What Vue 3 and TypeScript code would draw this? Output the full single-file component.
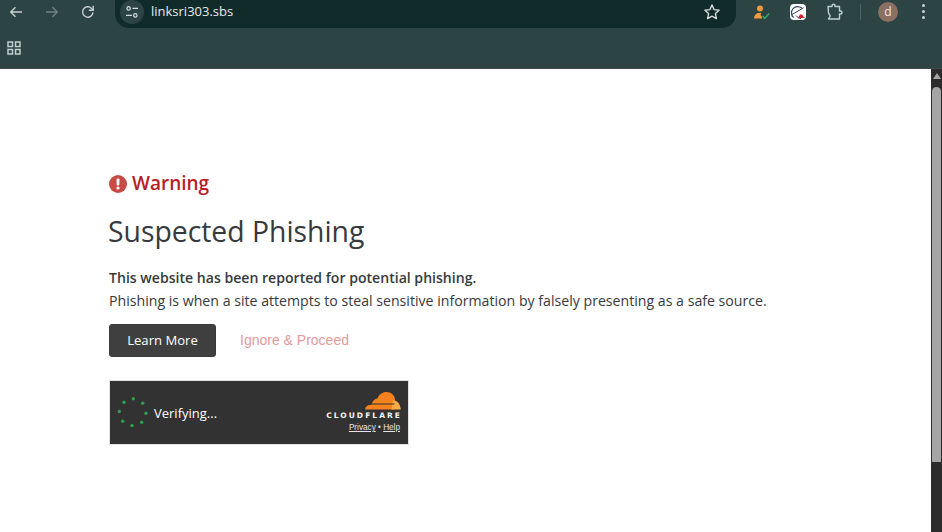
<script setup lang="ts">
const dots: [number, number][] = [
  [14, 7.2], [23.3, 3.8], [32.7, 8.2], [36, 18.2], [31.7, 27.2], [22, 30.5], [12.7, 26.2], [9.3, 16.5],
]
</script>

<template>
  <div class="browser">
    <header class="chrome">
      <div class="toolbar">
        <div class="nav-icons">
          <svg class="nav-icon" viewBox="0 0 16 16" fill="none" stroke="#c6d0d0" stroke-width="1.4">
            <path d="M14 8H3M7.5 3.2 2.7 8l4.8 4.8" />
          </svg>
          <svg class="nav-icon" viewBox="0 0 16 16" fill="none" stroke="#6f8180" stroke-width="1.4">
            <path d="M2 8h11M8.5 3.2 13.3 8l-4.8 4.8" />
          </svg>
          <svg class="nav-icon" viewBox="0 0 16 16" fill="none" stroke="#c6d0d0" stroke-width="1.4">
            <path d="M13 8.4A5.2 5.2 0 1 1 11.6 4.4L13 5.8" />
            <path d="M13.2 1.8v4.4H8.8" />
          </svg>
        </div>
        <div class="omnibox">
          <div class="omnibox-left">
            <span class="tune">
              <svg viewBox="0 0 16 16" width="16" height="16" fill="none" stroke="#d5dddd" stroke-width="1.2">
                <circle cx="4.6" cy="4.4" r="1.7" />
                <path d="M8.5 4.4h5.5M2 11.4h6" />
                <circle cx="11.3" cy="11.4" r="1.7" />
              </svg>
            </span>
            <span class="url">linksri303.sbs</span>
          </div>
          <svg class="star" viewBox="0 0 18 18" fill="none" stroke="#d5dddd" stroke-width="1.4">
            <path d="m9 2 2.1 4.6 5 .6-3.7 3.4 1 5L9 13.1l-4.4 2.500 1-5L1.900 7.200l5-.6Z" stroke-linejoin="round" />
          </svg>
        </div>
        <div class="extensions">
          <svg class="ext-person" viewBox="0 0 18 16">
            <circle cx="7" cy="4.500" r="3" fill="#f59a3c" />
            <path d="M1 14.500c0-3 2-5.500 5-5.500h2.500l-1 1.500 1.500 3v1Z" fill="#f59a3c" />
            <path d="m9.500 12 2.200 2.300 4.500-4.800" fill="none" stroke="#2ea860" stroke-width="1.600" />
          </svg>
          <span class="ext-speed">
            <svg viewBox="0 0 16 16" width="16" height="16" fill="none">
              <path d="M3.500 12.500A5.500 5.500 0 0 1 12 3.200" stroke="#39465f" stroke-width="1.200" />
              <path d="M2 9.500 13.500 2.800" stroke="#39465f" stroke-width="1" />
              <path d="M6 10.500c1.500 2 3 3 5 3" stroke="#39465f" stroke-width="1" />
              <path d="M8 13 10 9.500h2l1.500 2 1.500 1.500Z" fill="#d6202e" />
            </svg>
          </span>
          <svg class="ext-puzzle" viewBox="0 0 18 18" fill="none" stroke="#bcd0d0" stroke-width="1.400">
            <path d="M2 3.500h4V2.700a1.500 1.500 0 0 1 3 0v.8h4.500V8h1a1.500 1.500 0 0 1 0 3h-1v5H2.500l1.700-3-1.700-3.200Z" stroke-linejoin="round" />
          </svg>
        </div>
        <span class="divider"></span>
        <span class="avatar">d</span>
        <span class="kebab"><i></i><i></i><i></i></span>
      </div>
      <div class="bookmarks">
        <svg viewBox="0 0 14 14" width="14" height="14" fill="none" stroke="#c3cdcd" stroke-width="1.500">
          <rect x="1" y="1" width="4.500" height="4.500" />
          <rect x="8.500" y="1" width="4.500" height="4.500" />
          <rect x="1" y="8.500" width="4.500" height="4.500" />
          <rect x="8.500" y="8.500" width="4.500" height="4.500" />
        </svg>
      </div>
    </header>

    <div class="viewport">
      <main class="page">
        <h2 class="warning">
          <svg class="warn-icon" viewBox="0 0 18 18">
            <circle cx="9" cy="9" r="9" fill="#c84a46" />
            <rect x="7.600" y="3.500" width="2.800" height="7" rx="1" fill="#fff" />
            <circle cx="9" cy="13" r="1.600" fill="#fff" />
          </svg>
          Warning
        </h2>
        <h1 class="title">Suspected Phishing</h1>
        <p class="lead">This website has been reported for potential phishing.</p>
        <p class="desc">Phishing is when a site attempts to steal sensitive information by falsely presenting as a safe source.</p>
        <div class="actions">
          <button class="learn">Learn More</button>
          <a class="ignore" href="#">Ignore &amp; Proceed</a>
        </div>
        <div class="turnstile">
          <div class="verify">
            <svg class="spinner" viewBox="0 0 44 36" width="44" height="36">
              <circle v-for="(d, i) in dots" :key="i" :cx="d[0]" :cy="d[1]" r="1.700" fill="#2aa14f" />
            </svg>
            <span>Verifying...</span>
          </div>
          <div class="brand">
            <svg class="cloud" viewBox="0 0 36 18" width="36" height="18">
              <path d="M0 17.500c.3-2.800 2.500-4.500 5-4.500 .8-.1 1.300-.3 1.800-1.500C8.200 8 10.500 6.500 12.500 6.500c1.300-4 5-6.500 9-6.500 4.500 0 8 3 8.600 7.500l-.6 10Z" fill="#f6821f" />
              <path d="M28 8.500c3.500-.5 7 2.500 7.800 9h-9.300Z" fill="#fbad41" />
              <path d="M6 12h23.500" stroke="#33302f" stroke-width="1" />
            </svg>
            <span class="cf-name">CLOUDFLARE</span>
            <span class="cf-links"><a href="#">Privacy</a> • <a href="#">Help</a></span>
          </div>
        </div>
      </main>
      <aside class="scrollbar">
        <span class="arrow"></span>
        <span class="thumb"></span>
      </aside>
    </div>
  </div>
</template>

<style>
html, body {
  margin: 0;
  overflow: hidden;
}
</style>

<style scoped>
.browser {
  width: 942px;
  height: 532px;
  display: flex;
  flex-direction: column;
  overflow: hidden;
  font-family: "Open Sans", "Noto Sans", sans-serif;
}

/* browser chrome */
.chrome {
  height: 69px;
  flex: none;
  background: #2c4443;
  border-bottom: 1px solid #3b4b4a;
  box-sizing: border-box;
}
.toolbar {
  height: 28px;
  display: flex;
  align-items: center;
}
.nav-icons {
  display: flex;
  gap: 20px;
  padding-left: 8px;
  margin-top: -5px;
}
.nav-icon {
  width: 16px;
  height: 16px;
}
.omnibox {
  width: 621px;
  height: 28px;
  margin-left: 19px;
  background: #112a2a;
  border-radius: 0 0 14px 14px;
  display: flex;
  align-items: center;
  justify-content: space-between;
  padding: 0 15px 5px 5px;
  box-sizing: border-box;
}
.omnibox-left {
  display: flex;
  align-items: center;
  gap: 7px;
}
.tune {
  width: 24px;
  height: 24px;
  border-radius: 50%;
  background: #2c4443;
  display: flex;
  align-items: center;
  justify-content: center;
}
.url {
  color: #e6ecec;
  font-size: 13px;
  margin-top: -2px;
}
.star {
  width: 18px;
  height: 18px;
}
.extensions {
  display: flex;
  align-items: center;
  margin-left: 17px;
  margin-top: -5px;
}
.ext-person {
  width: 18px;
  height: 16px;
}
.ext-speed {
  width: 16px;
  height: 16px;
  background: #fff;
  border-radius: 4px;
  margin-left: 19px;
  display: block;
}
.ext-puzzle {
  width: 18px;
  height: 18px;
  margin-left: 20px;
}
.divider {
  width: 1px;
  height: 16px;
  background: #4a6160;
  margin: -5px 0 0 16px;
}
.avatar {
  width: 20px;
  height: 20px;
  margin: -5px 0 0 17px;
  border-radius: 50%;
  background: #8d6e63;
  color: #f0e8e4;
  font-size: 12px;
  line-height: 19px;
  text-align: center;
}
.kebab {
  display: flex;
  flex-direction: column;
  gap: 3px;
  margin: -5px 0 0 24px;
}
.kebab i {
  width: 3px;
  height: 3px;
  border-radius: 50%;
  background: #c9d4d4;
}
.bookmarks {
  height: 40px;
  padding: 10px 0 0 7px;
  box-sizing: border-box;
}

/* page */
.viewport {
  flex: 1;
  display: flex;
  min-height: 0;
}
.page {
  flex: 1;
  background: #fff;
  padding: 102px 0 0 109px;
  box-sizing: border-box;
}
.warning {
  margin: 0;
  display: flex;
  align-items: center;
  gap: 5px;
  color: #b92025;
  font-size: 19px;
  font-weight: 600;
  line-height: 25px;
}
.warn-icon {
  width: 18px;
  height: 18px;
}
.title {
  margin: 15px 0 0 -1px;
  color: #373a3c;
  font-size: 28.350px;
  font-weight: 400;
  line-height: 40px;
}
.lead {
  margin: 15px 0 0;
  color: #373a3c;
  font-size: 14.080px;
  font-weight: 600;
  line-height: 23px;
}
.desc {
  margin: 0;
  color: #373a3c;
  font-size: 14.150px;
  line-height: 23px;
  white-space: nowrap;
}
.actions {
  display: flex;
  align-items: center;
  margin-top: 12px;
}
.learn {
  width: 107px;
  height: 33px;
  padding: 0 0 1px;
  border: 1px solid #3a3a3a;
  border-radius: 3px;
  background: #3f3f3f;
  color: #fff;
  font-family: inherit;
  font-size: 13.100px;
}
.ignore {
  margin-left: 24px;
  margin-top: -1px;
  color: #e6989c;
  font-family: "Liberation Sans", Arial, sans-serif;
  font-size: 14px;
  text-decoration: none;
}

/* cloudflare widget */
.turnstile {
  width: 300px;
  height: 65px;
  margin-top: 23px;
  box-sizing: border-box;
  background: #323232;
  border: 1px solid #e0e0e0;
  display: flex;
  align-items: center;
  justify-content: space-between;
  padding: 0 7px 0 0;
}
.verify {
  display: flex;
  align-items: center;
  color: #fff;
  font-size: 13px;
}
.spinner {
  flex: none;
}
.brand {
  display: flex;
  flex-direction: column;
  align-items: flex-end;
  color: #e6e6e6;
}
.cloud {
  display: block;
  margin-bottom: 1px;
}
.cf-name {
  font-family: "DejaVu Sans", sans-serif;
  font-size: 7.500px;
  font-weight: 700;
  letter-spacing: 2.050px;
  line-height: 9px;
  color: #f5f5f5;
  margin-right: -1px;
}
.cf-links {
  font-family: "Liberation Sans", Arial, sans-serif;
  font-size: 8.200px;
  line-height: 11px;
  margin-top: 2px;
  margin-right: 1px;
}
.cf-links a {
  color: #e6e6e6;
  text-decoration: underline;
}

/* page scrollbar */
.scrollbar {
  width: 11px;
  flex: none;
  background: #2c2c2c;
  display: flex;
  flex-direction: column;
  align-items: center;
}
.arrow {
  margin-top: 4px;
  width: 0;
  height: 0;
  border-left: 4.500px solid transparent;
  border-right: 4.500px solid transparent;
  border-bottom: 6px solid #a5a5a5;
}
.thumb {
  width: 9px;
  height: 375px;
  margin-top: 8px;
  border-radius: 5px 5px 0 0;
  background: #a5a5a5;
}
</style>
